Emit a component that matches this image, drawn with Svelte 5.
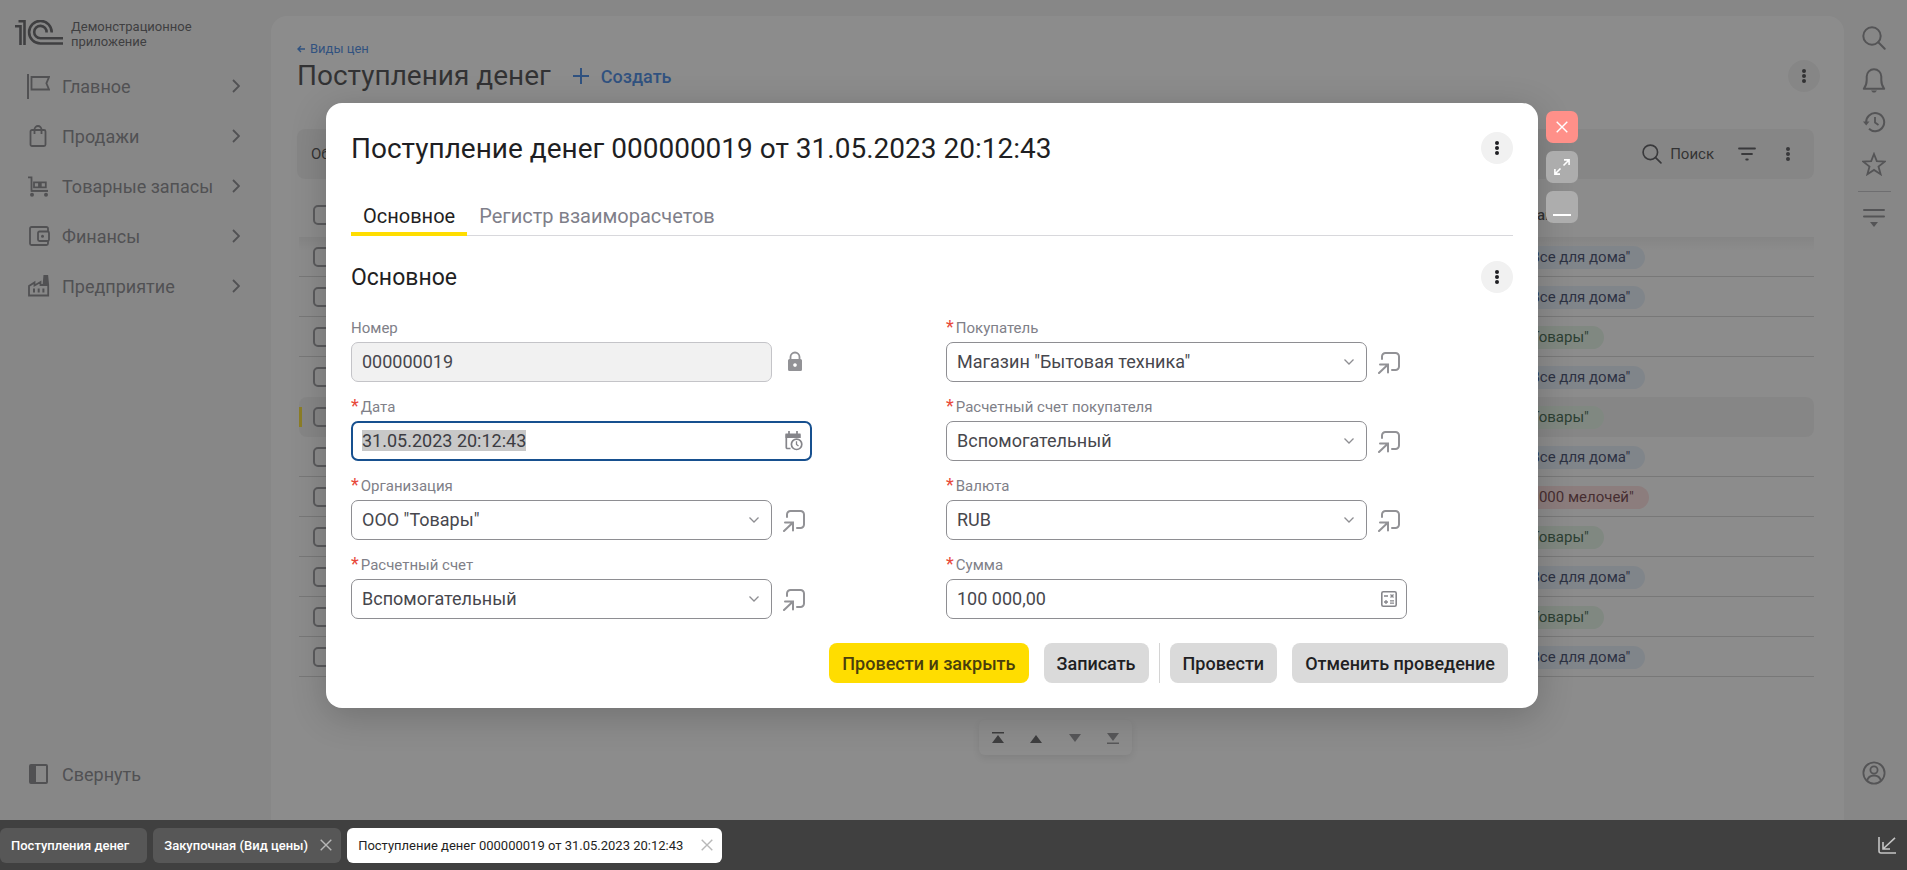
<script lang="ts">
  import { onMount } from 'svelte';

  type Field = {
    id: string;
    label: string;
    value: string;
    kind: 'locked' | 'date' | 'select' | 'sum';
    required: boolean;
  };

  const menu = [
    { icon: 'flag', title: 'Главное' },
    { icon: 'bag', title: 'Продажи' },
    { icon: 'cart', title: 'Товарные запасы' },
    { icon: 'wallet', title: 'Финансы' },
    { icon: 'factory', title: 'Предприятие' }
  ];

  const home = { name: 'ООО "Все для дома"', color: 'blue' };
  const goods = { name: 'ООО "Товары"', color: 'green' };
  const small = { name: 'ООО "1000 мелочей"', color: 'red' };
  const rows = [home, home, goods, home, goods, home, small, goods, home, goods, home];
  const selectedRow = 4;

  const columns: Field[][] = [
    [
      { id: 'number', label: 'Номер', value: '000000019', kind: 'locked', required: false },
      { id: 'date', label: 'Дата', value: '31.05.2023 20:12:43', kind: 'date', required: true },
      { id: 'org', label: 'Организация', value: 'ООО "Товары"', kind: 'select', required: true },
      { id: 'account', label: 'Расчетный счет', value: 'Вспомогательный', kind: 'select', required: true }
    ],
    [
      { id: 'buyer', label: 'Покупатель', value: 'Магазин "Бытовая техника"', kind: 'select', required: true },
      { id: 'buyerAccount', label: 'Расчетный счет покупателя', value: 'Вспомогательный', kind: 'select', required: true },
      { id: 'currency', label: 'Валюта', value: 'RUB', kind: 'select', required: true },
      { id: 'sum', label: 'Сумма', value: '100 000,00', kind: 'sum', required: true }
    ]
  ];

  const windows = [
    { title: 'Поступления денег', closable: false, active: false },
    { title: 'Закупочная (Вид цены)', closable: true, active: false },
    { title: 'Поступление денег 000000019 от 31.05.2023 20:12:43', closable: true, active: true }
  ];

  onMount(() => {
    const input = document.getElementById('date') as HTMLInputElement;
    input.focus();
    input.select();
  });
</script>

{#snippet dots()}
  <svg width="6" height="18" viewBox="0 0 6 18" fill="currentColor">
    <circle cx="3" cy="4" r="2" /><circle cx="3" cy="9" r="2" /><circle cx="3" cy="14" r="2" />
  </svg>
{/snippet}

{#snippet cross(size: number)}
  <svg width={size} height={size} viewBox="0 0 12 12" fill="none" stroke="currentColor" stroke-width="1.4">
    <path d="M.7.7l10.6 10.6M11.3.7L.7 11.3" />
  </svg>
{/snippet}

{#snippet search(size: number)}
  <svg width={size} height={size} viewBox="0 0 24 24" fill="none" stroke="currentColor" stroke-width="2" stroke-linecap="round">
    <circle cx="10" cy="10" r="8.7" /><path d="M16.3 16.3l6.4 6.4" />
  </svg>
{/snippet}

{#snippet menuIcon(name: string)}
  <svg class="menu-icon" width="24" height="26" viewBox="0 0 24 26" fill="none" stroke="currentColor" stroke-width="1.8">
    {#if name === 'flag'}
      <path d="M2 1v25" stroke-width="2" />
      <path d="M5.5 4H23l-2.6 6.3L23 16.500H5.500z" />
    {:else if name === 'bag'}
      <rect x="4.500" y="7" width="15" height="16" rx="1.500" />
      <path d="M8.500 11V6.500a3.500 3.500 0 0 1 7 0V11" />
    {:else if name === 'cart'}
      <path d="M2 4.300h3.500v13.500H22" />
      <path d="M8 9.300h5v5H8zM14.800 9.300h5v5h-5z" />
      <path d="M5 17.800h17" />
      <circle cx="6" cy="21.800" r="2" fill="currentColor" stroke="none" />
      <circle cx="20" cy="21.800" r="2" fill="currentColor" stroke="none" />
    {:else if name === 'wallet'}
      <path d="M22 8.500V5.500a1.500 1.500 0 0 0-1.500-1.500H5.500A1.500 1.500 0 0 0 4 5.500v15A1.500 1.500 0 0 0 5.500 22h15a1.500 1.500 0 0 0 1.500-1.500V18" />
      <rect x="12" y="8.500" width="11" height="9.500" rx="1.500" />
      <circle cx="16.500" cy="13.200" r="1.500" fill="currentColor" stroke="none" />
    {:else}
      <path d="M3 22.500V13l5.500-3.500v3l6-3.500v3h3l.8-9h3l.9 9v10.500z" />
      <path d="M18.300 3h3l.9 10h-4.700z" fill="currentColor" stroke="none" />
      <path d="M8 15.500v4M12.700 15.500v4M17.400 15.500v4" stroke-width="2" />
    {/if}
  </svg>
{/snippet}

<div class="app">
  <div class="desktop">
    <aside class="sidebar">
      <div class="brand">
        <svg width="48" height="25" viewBox="0 0 48 25" fill="none" stroke="currentColor" stroke-width="2.600">
          <path d="M3.500 1.300h6V25M0 6.300h5.500V25" />
          <path d="M36.700 12.500A11.300 11.300 0 1 0 25.400 23.500H48" />
          <path d="M31.600 12.500A6.200 6.200 0 1 0 25.400 18.300H48" />
        </svg>
        <span>Демонстрационное<br />приложение</span>
      </div>
      <nav>
        {#each menu as item}
          <button class="menu-item">
            {@render menuIcon(item.icon)}
            <span>{item.title}</span>
            <svg class="arrow" width="8" height="14" viewBox="0 0 8 14" fill="none" stroke="currentColor" stroke-width="1.800">
              <path d="M1 1l6 6-6 6" />
            </svg>
          </button>
        {/each}
      </nav>
      <button class="menu-item collapse">
        <svg class="menu-icon" width="24" height="20" viewBox="0 0 24 20">
          <path d="M5 0h15a2 2 0 0 1 2 2v16a2 2 0 0 1-2 2H5a2 2 0 0 1-2-2V2a2 2 0 0 1 2-2zM10 2v16h10V2z" fill="currentColor" fill-rule="evenodd" />
        </svg>
        <span>Свернуть</span>
      </button>
    </aside>

    <main class="page">
      <a class="back" href="#prices">
        <svg width="8" height="8" viewBox="0 0 8 8" fill="none" stroke="currentColor" stroke-width="1.400"><path d="M8 4H1M4 1L1 4l3 3" /></svg>
        Виды цен
      </a>
      <header class="page-head">
        <h1>Поступления денег</h1>
        <button class="create">
          <svg width="16" height="16" viewBox="0 0 16 16" stroke="currentColor" stroke-width="2"><path d="M8 0v16M0 8h16" /></svg>
          Создать
        </button>
        <button class="round" aria-label="Еще">{@render dots()}</button>
      </header>
      <div class="toolbar">
        <button class="tool">Обновить</button>
        <button class="tool find">{@render search(20)} Поиск</button>
        <button class="tool" aria-label="Фильтр">
          <svg width="18" height="14" viewBox="0 0 18 14" stroke="currentColor" stroke-width="1.800" stroke-linecap="round"><path d="M1 1.500h16M4 7h10M8.200 12.500h1.600" /></svg>
        </button>
        <button class="tool more" aria-label="Еще">{@render dots()}</button>
      </div>
      <table>
        <thead>
          <tr>
            <th class="check"><input type="checkbox" aria-label="Выбрать все" /></th>
            <th class="org">Организация</th>
          </tr>
        </thead>
        <tbody>
          {#each rows as row, i}
            <tr class:selected={i === selectedRow} class:before={i === selectedRow - 1}>
              <td class="check"><input type="checkbox" aria-label="Выбрать строку" /></td>
              <td class="org"><span class="pill {row.color}">{row.name}</span></td>
            </tr>
          {/each}
        </tbody>
      </table>
      <div class="pager">
        <button aria-label="В начало"><svg width="14" height="12" viewBox="0 0 14 12" fill="currentColor"><path d="M1 0h12v1.500H1zM7 3l6 8H1z" /></svg></button>
        <button aria-label="Вверх"><svg width="14" height="12" viewBox="0 0 14 12" fill="currentColor"><path d="M7 3l6 8H1z" /></svg></button>
        <button class="off" aria-label="Вниз"><svg width="14" height="12" viewBox="0 0 14 12" fill="currentColor"><path d="M7 10l6-8H1z" /></svg></button>
        <button class="off" aria-label="В конец"><svg width="14" height="12" viewBox="0 0 14 12" fill="currentColor"><path d="M1 10.500h12V12H1zM7 9l6-8H1z" /></svg></button>
      </div>
    </main>

    <aside class="rail">
      <button aria-label="Поиск">{@render search(24)}</button>
      <button aria-label="Оповещения">
        <svg width="24" height="26" viewBox="0 0 24 26" fill="none" stroke="currentColor" stroke-width="2">
          <path d="M1.800 21.800H22.200C20 19 19.300 17 19.300 13V9.500a7.300 7.300 0 0 0-14.600 0V13c0 4-.7 6-2.900 8.800z" stroke-linejoin="round" />
          <path d="M9 23.500h6l-1.800 2h-2.400z" fill="currentColor" stroke="none" />
        </svg>
      </button>
      <button aria-label="История">
        <svg width="24" height="24" viewBox="0 0 24 24" fill="none" stroke="currentColor" stroke-width="2">
          <path d="M4.200 13A9 9 0 1 1 7 18.700" /><path d="M13 7v5.500l3.500 2.500" stroke-width="1.800" />
          <path d="M1 11.500h6.500L4.200 15.500z" fill="currentColor" stroke="none" />
        </svg>
      </button>
      <button aria-label="Избранное">
        <svg width="24" height="24" viewBox="0 0 24 24" fill="none" stroke="currentColor" stroke-width="1.800">
          <path d="M12 2l2.800 7.200 7.900.4-6.200 4.900 2.100 7.700L12 17.900l-6.600 4.300 2.100-7.700L1.300 9.600l7.900-.4z" />
        </svg>
      </button>
      <hr />
      <button class="service" aria-label="Меню">
        <svg width="22" height="20" viewBox="0 0 22 20" stroke="currentColor" stroke-width="2" stroke-linecap="round">
          <path d="M1 2h20M1 8.500h20" /><path d="M7 14h8l-4 5z" fill="currentColor" stroke="none" />
        </svg>
      </button>
      <button class="user" aria-label="Пользователь">
        <svg width="24" height="24" viewBox="0 0 24 24" fill="none" stroke="currentColor" stroke-width="1.800">
          <circle cx="12" cy="12" r="10.600" /><circle cx="12" cy="9" r="3.600" /><path d="M5 20a7.200 7.200 0 0 1 14 0" />
        </svg>
      </button>
    </aside>

    <div class="overlay">
      <section class="modal" role="dialog" aria-labelledby="modal-title">
        <header class="modal-head">
          <h2 id="modal-title">Поступление денег 000000019 от 31.05.2023 20:12:43</h2>
          <button class="round" aria-label="Еще">{@render dots()}</button>
        </header>
        <nav class="tabs">
          <button class="active">Основное</button>
          <button>Регистр взаиморасчетов</button>
        </nav>
        <div class="section-head">
          <h3>Основное</h3>
          <button class="round" aria-label="Еще">{@render dots()}</button>
        </div>
        <form class="form" id="receipt">
          {#each columns as column}
            <div class="column">
              {#each column as field}
                <div class="field">
                  <label for={field.id}>{#if field.required}<span class="star">*</span>{/if}{field.label}</label>
                  <div class="line">
                    {#if field.kind === 'select'}
                      <div class="box">
                        <select id={field.id}><option>{field.value}</option></select>
                        <svg class="inner" width="12" height="8" viewBox="0 0 12 8" fill="none" stroke="currentColor" stroke-width="1.300"><path d="M1.500 1.500L6 6l4.500-4.500" /></svg>
                      </div>
                      <button type="button" class="open" aria-label="Открыть">
                        <svg width="24" height="24" viewBox="0 0 24 24" fill="none" stroke="currentColor" stroke-width="2" stroke-linecap="round">
                          <path d="M5 9V6.500A3.500 3.500 0 0 1 8.500 3H18.500A3.500 3.500 0 0 1 22 6.500v10a3.500 3.500 0 0 1-3.500 3.500H15" />
                          <path d="M2 23L11 14.500M3 14.500h8v8" />
                        </svg>
                      </button>
                    {:else if field.kind === 'locked'}
                      <div class="box locked"><input id={field.id} type="text" value={field.value} readonly /></div>
                      <span class="open">
                        <svg width="24" height="24" viewBox="0 0 24 24">
                          <path d="M8.500 10V7a4.500 4.500 0 0 1 9 0v3" fill="none" stroke="currentColor" stroke-width="1.800" />
                          <path d="M7.500 9h11A1.500 1.500 0 0 1 20 10.500v9a1.500 1.500 0 0 1-1.500 1.500h-11A1.500 1.500 0 0 1 6 19.500v-9A1.500 1.500 0 0 1 7.500 9zM13 13.200a1.800 1.800 0 1 0 .01 0z" fill="currentColor" />
                        </svg>
                      </span>
                    {:else if field.kind === 'date'}
                      <div class="box date">
                        <input id={field.id} type="text" value={field.value} />
                        <button type="button" class="pick" aria-label="Выбрать дату">
                          <svg width="18" height="20" viewBox="0 0 18 20" fill="none" stroke="currentColor" stroke-width="1.700">
                            <path d="M5.500 17.500H2.300a1 1 0 0 1-1-1V4h13.400v3" />
                            <path d="M.5 2.500h15v4.500H.5z" fill="currentColor" stroke="none" />
                            <path d="M4 0v3M12 0v3" />
                            <circle cx="11.600" cy="13.300" r="5.200" /><path d="M11.500 10.300v3.200l2 1.600" stroke-width="1.300" />
                          </svg>
                        </button>
                      </div>
                    {:else}
                      <div class="box">
                        <input id={field.id} type="text" value={field.value} />
                        <button type="button" class="pick" aria-label="Калькулятор">
                          <svg width="16" height="16" viewBox="0 0 16 16" fill="none" stroke="currentColor" stroke-width="1.300">
                            <rect x=".8" y=".8" width="14.400" height="14.400" rx="1.500" stroke-width="1.600" />
                            <path d="M3 5h4M9.500 3.500l3 3M12.500 3.500l-3 3M3 11h4M5 9v4M9 9.800h4M9 12.200h4" />
                          </svg>
                        </button>
                      </div>
                    {/if}
                  </div>
                </div>
              {/each}
            </div>
          {/each}
        </form>
        <footer class="actions">
          <button class="primary">Провести и закрыть</button>
          <button>Записать</button>
          <span class="divider"></span>
          <button>Провести</button>
          <button>Отменить проведение</button>
        </footer>
      </section>
      <div class="window-buttons">
        <button class="close" aria-label="Закрыть">{@render cross(12)}</button>
        <button aria-label="Развернуть">
          <svg width="16" height="16" viewBox="0 0 16 16" fill="none" stroke="currentColor" stroke-width="1.600">
            <path d="M9.500 6.500L15 1M10 .9h5.100V6M6.500 9.500L1 15M.9 10v5.100H6" />
          </svg>
        </button>
        <button class="minimize" aria-label="Свернуть"><svg width="18" height="2" viewBox="0 0 18 2"><path d="M0 0h18v2H0z" fill="currentColor" /></svg></button>
      </div>
    </div>
  </div>

  <footer class="taskbar">
    {#each windows as win}
      <div class="task" class:current={win.active}>
        <button>{win.title}</button>
        {#if win.closable}<button class="task-close" aria-label="Закрыть">{@render cross(12)}</button>{/if}
      </div>
    {/each}
    <button class="restore" aria-label="Свернуть все">
      <svg width="18" height="17" viewBox="0 0 18 17" fill="none" stroke="currentColor" stroke-width="1.600">
        <path d="M1 0v14a2 2 0 0 0 2 2h15M17 .8L5 12M5 5v7h7" />
      </svg>
    </button>
  </footer>
</div>

<style>
  :global(body) {
    margin: 0;
  }

  .app {
    min-height: 100vh;
    display: flex;
    flex-direction: column;
    font-family: Roboto, "Liberation Sans", sans-serif;
    color: #1f1f23;
  }

  button {
    font: inherit;
    color: inherit;
    background: none;
    border: 0;
    padding: 0;
    display: flex;
    align-items: center;
    justify-content: center;
  }

  svg {
    flex: none;
    display: block;
  }

  h1, h2, h3 {
    margin: 0;
    font-weight: 400;
  }

  .desktop {
    flex: 1;
    display: flex;
    position: relative;
    background: #f2f2f2;
  }

  .sidebar {
    width: 271px;
    display: flex;
    flex-direction: column;
  }

  .brand {
    display: flex;
    align-items: center;
    gap: 8px;
    height: 30px;
    padding: 19px 0 0 15px;
    margin-bottom: 12px;
    font-size: 13px;
    line-height: 15px;
    color: #404044;
  }
  .brand svg {
    margin-top: -4px;
  }

  .menu-item {
    width: 100%;
    height: 50px;
    padding: 0 31px 0 26px;
    gap: 12px;
    font-size: 18px;
    color: #6c6c72;
  }
  .menu-item span {
    flex: 1;
    text-align: left;
    white-space: nowrap;
  }
  .collapse {
    margin: auto 0 21px;
  }

  .page {
    flex: 1;
    min-width: 0;
    margin-top: 16px;
    padding: 24px 30px 0 26px;
    border-radius: 16px 16px 0 0;
    background: #fff;
  }
  .back {
    display: flex;
    align-items: center;
    gap: 5px;
    font-size: 13px;
    line-height: 18px;
    color: #1a6fe0;
    text-decoration: none;
  }
  .page-head {
    display: flex;
    align-items: center;
    height: 36px;
  }
  .page-head h1 {
    font-size: 28px;
    line-height: 36px;
  }
  .create {
    gap: 12px;
    margin-left: 22px;
    font-size: 18px;
    font-weight: 500;
    color: #1a6fe0;
  }
  .round {
    width: 32px;
    height: 32px;
    margin-left: auto;
    border-radius: 50%;
    background: #f1f1f1;
  }
  .page-head .round {
    margin-right: -6px;
  }

  .toolbar {
    display: flex;
    align-items: center;
    height: 50px;
    margin-top: 35px;
    padding: 0 16px 0 14px;
    border-radius: 8px;
    background: #f1f1f1;
    font-size: 15px;
  }
  .tool svg {
    color: #303036;
  }
  .find {
    gap: 8px;
    margin: 0 24px 0 auto;
  }
  .more {
    width: 20px;
    margin-left: 22px;
  }

  table {
    width: calc(100% - 2px);
    margin: 14px 0 0 2px;
    border-spacing: 0;
    font-size: 15px;
  }
  th, td {
    box-sizing: border-box;
    height: 40px;
    padding: 0;
    text-align: left;
  }
  th {
    height: 44px;
    font-weight: 500;
  }
  td {
    border-bottom: 1px solid #cdcdcd;
  }
  .check {
    padding-left: 14px;
  }
  .org {
    width: 338px;
  }
  td.org {
    padding-top: 2px;
  }
  th.org {
    padding-left: 3px;
  }
  tbody tr:first-child td {
    background: linear-gradient(#ededed, #fff 14px);
  }
  tr.before td {
    border-color: transparent;
  }
  tr.selected td {
    border-color: transparent;
    background: #f1f1f1 border-box;
  }
  tr.selected td:first-child {
    border-radius: 8px 0 0 8px;
    background: linear-gradient(#fd0, #fd0) left center / 3px 20px no-repeat, #f1f1f1 border-box;
  }
  tr.selected td:last-child {
    border-radius: 0 8px 8px 0;
  }
  table input {
    appearance: none;
    display: block;
    width: 20px;
    height: 20px;
    margin: 0;
    border: 2px solid #85858a;
    border-radius: 5px;
  }
  .pill {
    display: inline-block;
    padding: 0 15px;
    border-radius: 12px;
    line-height: 23px;
  }
  .blue {
    background: #e2edfb;
    color: #10204a;
  }
  .green {
    background: #e0f5e3;
    color: #0c4020;
  }
  .red {
    background: #ffd9d9;
    color: #501018;
  }

  .pager {
    display: flex;
    justify-content: space-around;
    width: 153px;
    height: 35px;
    margin: 43px auto 60px;
    border-radius: 6px;
    box-shadow: 0 3px 8px rgba(0, 0, 0, .12);
    color: #3c3c40;
  }
  .off {
    color: #7c7c80;
  }

  .rail {
    box-sizing: border-box;
    width: 63px;
    display: flex;
    flex-direction: column;
    align-items: center;
    padding: 17px 3px 0 0;
    color: #747478;
  }
  .rail button {
    width: 42px;
    height: 42px;
  }
  .rail hr {
    width: 33px;
    margin: 6px 0 5px;
    border: 0;
    border-top: 1px solid #b4b4b8;
  }
  .rail .user {
    margin: auto 0 26px;
  }

  .overlay {
    position: absolute;
    inset: 0;
    display: flex;
    align-items: flex-start;
    gap: 8px;
    padding: 103px 329px 0 326px;
    background: rgba(64, 64, 64, .6);
  }

  .modal {
    flex: 1;
    min-width: 0;
    padding: 25px;
    border-radius: 16px;
    background: #fff;
    box-shadow: 0 8px 36px rgba(0, 0, 0, .2);
  }
  .modal-head {
    display: flex;
    align-items: center;
    height: 40px;
  }
  .modal-head h2 {
    font-size: 28px;
    line-height: 40px;
    padding-top: 2px;
  }
  .tabs {
    display: flex;
    height: 44px;
    margin-top: 24px;
    box-shadow: inset 0 -1px #d8d8dc;
    font-size: 20px;
    color: #7f7f8a;
  }
  .tabs button {
    box-sizing: border-box;
    padding: 8px 12px 0;
    border-bottom: 4px solid transparent;
    border-radius: 3px 3px 0 0;
  }
  .tabs .active {
    background: linear-gradient(#fd0, #fd0) bottom / 100% 4px no-repeat border-box;
    color: #1f1f23;
  }
  .section-head {
    display: flex;
    align-items: center;
    height: 32px;
    margin-top: 25px;
  }
  .section-head h3 {
    font-size: 23px;
  }

  .form {
    display: flex;
    gap: 28px;
    margin-top: 25px;
  }
  .column {
    flex: 1;
    display: flex;
    flex-direction: column;
    gap: 15px;
  }
  .field {
    max-width: 461px;
  }
  .field label {
    display: block;
    margin-bottom: 4px;
    font-size: 15px;
    line-height: 20px;
    color: #808088;
  }
  .star {
    margin-right: 2px;
    font-size: 18px;
    line-height: 1;
    color: #e8493b;
  }
  .line {
    display: flex;
  }
  .box {
    flex: 1;
    box-sizing: border-box;
    height: 40px;
    display: flex;
    align-items: center;
    position: relative;
    border: 1px solid #8e8e92;
    border-radius: 7px;
    background: #fff;
    color: #8e8e92;
  }
  .box input, .box select {
    flex: 1;
    min-width: 0;
    height: 100%;
    box-sizing: border-box;
    padding: 0 10px 2px;
    border: 0;
    outline: 0;
    appearance: none;
    background: none;
    font: 18px Roboto, "Liberation Sans", sans-serif;
    color: #47474d;
  }
  .box input::selection {
    background: #c8c8c8;
    color: #3c3c42;
  }
  .locked {
    border-color: #c4c4c8;
    background: #f1f1f1;
  }
  .date {
    border: 2px solid #17508f;
  }
  .date input {
    padding: 0 9px 2px;
  }
  .date .pick {
    margin-right: 7px;
  }
  .inner {
    position: absolute;
    right: 11px;
    pointer-events: none;
  }
  .pick {
    margin-right: 9px;
    color: #85858a;
  }
  .open {
    display: flex;
    align-items: center;
    justify-content: center;
    width: 24px;
    margin: 0 6px 0 10px;
    color: #929296;
  }

  .actions {
    display: flex;
    justify-content: flex-end;
    gap: 15px;
    margin: 24px 5px 0 0;
    font-size: 18px;
    font-weight: 500;
  }
  .actions button {
    height: 40px;
    padding: 0 13px;
    border-radius: 8px;
    background: #dadada;
  }
  .actions .primary {
    background: #fd0;
    color: #4a3f0c;
  }
  .divider {
    width: 1px;
    margin: 0 -5px;
    background: #d4d4d4;
  }

  .window-buttons {
    display: flex;
    flex-direction: column;
    gap: 8px;
    padding-top: 8px;
    color: #fff;
  }
  .window-buttons button {
    width: 32px;
    height: 32px;
    border-radius: 7px;
    background: #adadad;
  }
  .window-buttons .close {
    background: #ff9089;
  }
  .window-buttons .minimize {
    align-items: flex-end;
    padding-bottom: 7px;
  }

  .taskbar {
    display: flex;
    align-items: center;
    gap: 6px;
    height: 50px;
    background: #404040;
    font-size: 13px;
    color: #fff;
  }
  .task {
    display: flex;
    gap: 12px;
    height: 35px;
    padding: 0 9px 0 11px;
    border-radius: 6px;
    background: #575757;
    font-weight: 500;
  }
  .task:first-child {
    padding-right: 18px;
  }
  .task-close {
    color: #b8b8b8;
  }
  .current {
    gap: 18px;
    background: #fff;
    color: #1f1f23;
    font-weight: 400;
  }
  .restore {
    margin: 0 11px 0 auto;
    color: #c4c4c4;
  }
</style>
